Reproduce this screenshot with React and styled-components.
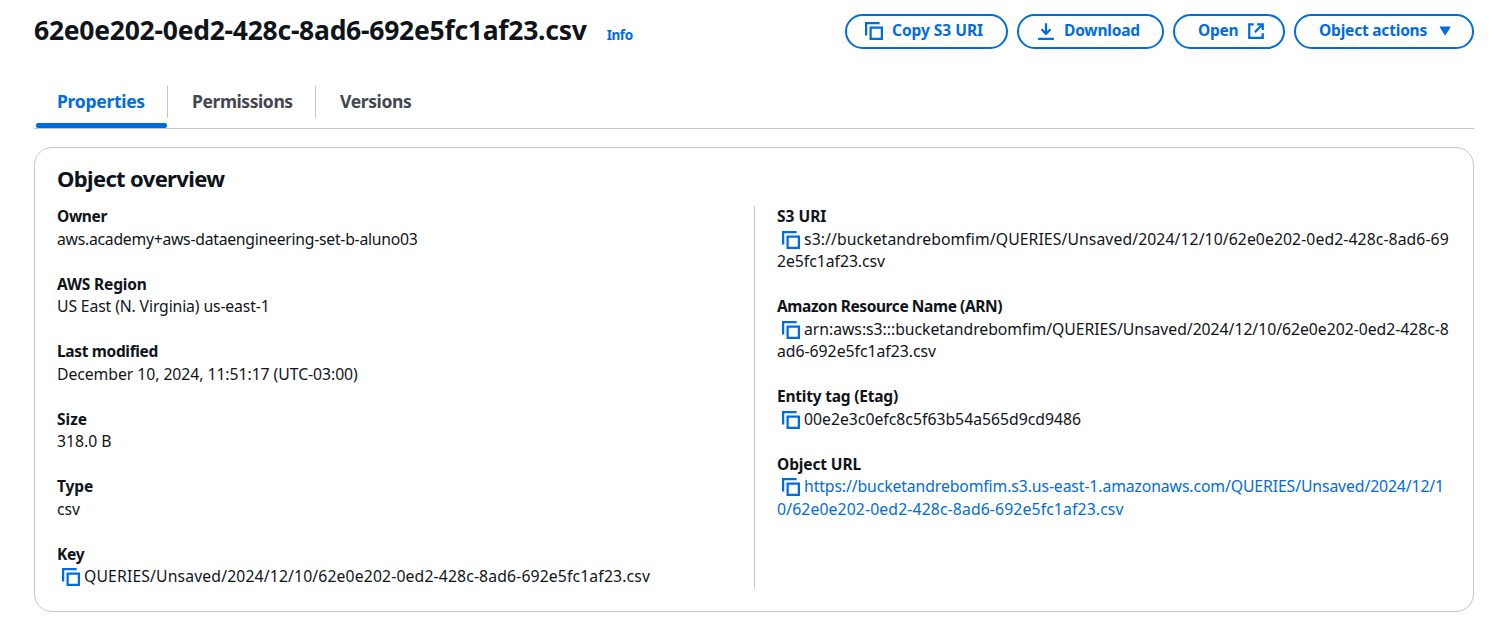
import React from "react";
import styled, { createGlobalStyle } from "styled-components";

const blue = "#006ce0";
const line = "#c6c6cd";

const GlobalStyle = createGlobalStyle`
  *, *::before, *::after { box-sizing: border-box; }
  body {
    margin: 0;
    background: #ffffff;
    color: #0f141a;
    font-family: "Noto Sans", "Open Sans", sans-serif;
    font-size: 15.75px;
    line-height: 22.5px;
  }
`;

const Page = styled.main`
  padding: 14px 26px 11px 34px;
`;

const PageHeader = styled.header`
  display: flex;
  justify-content: space-between;
  align-items: flex-start;
  height: 35px;
`;

const TitleGroup = styled.div`
  display: flex;
  align-items: baseline;
  gap: 20px;
`;

const Title = styled.h1`
  margin: 0;
  font-size: 26.5px;
  line-height: 32px;
  font-weight: 700;
  letter-spacing: -0.26px;
  white-space: nowrap;
`;

const InfoLink = styled.a`
  color: ${blue};
  font-size: 13.5px;
  font-weight: 700;
  letter-spacing: -0.4px;
`;

const Actions = styled.div`
  display: flex;
  gap: 9px;
`;

const ActionButton = styled.button`
  display: flex;
  align-items: center;
  gap: 9px;
  width: ${(p) => p.$width}px;
  height: 35px;
  padding: 0 ${(p) => p.$padEnd ?? 18}px 1px ${(p) => (p.$iconEnd ? 23 : 18)}px;
  justify-content: ${(p) => (p.$iconEnd ? "space-between" : "flex-start")};
  border: 2px solid ${blue};
  border-radius: 18px;
  background: #ffffff;
  color: ${blue};
  font: 700 15.5px/22.5px "Noto Sans", sans-serif;
  letter-spacing: ${(p) => p.$track}px;
  white-space: nowrap;
`;

const ButtonText = styled.span`
  padding-bottom: 1px;
`;

const Icon = styled.svg`
  display: block;
  flex: none;
  width: 18px;
  height: 18px;
  fill: none;
  stroke: ${blue};
  stroke-width: 2;
`;

const Tabs = styled.nav`
  display: flex;
  margin-top: 37px;
  height: 43px;
  border-bottom: 1px solid ${line};
`;

const Tab = styled.div`
  width: ${(p) => p.$width}px;
`;

const TabLabel = styled.a`
  display: block;
  height: 32px;
  padding-left: ${(p) => (p.$active ? 23 : 24)}px;
  border-right: ${(p) => (p.$last ? "none" : `1px solid ${line}`)};
  color: ${(p) => (p.$active ? blue : "#424650")};
  font-size: 17.5px;
  font-weight: 700;
  line-height: 30px;
  letter-spacing: ${(p) => p.$track}px;
`;

const TabIndicator = styled.div`
  height: 5px;
  margin: 5px 1px 0 2px;
  border-radius: 2px;
  background: ${blue};
`;

const Card = styled.section`
  margin-top: 18px;
  height: 465px;
  padding: 17px 22px 22px;
  border: 1px solid ${line};
  border-radius: 18px;
`;

const CardTitle = styled.h2`
  margin: 0 0 14px;
  font-size: 22px;
  line-height: 27px;
  font-weight: 700;
  letter-spacing: -0.65px;
`;

const Columns = styled.div`
  display: grid;
  grid-template-columns: 697px 1fr;
  height: 383px;
`;

const Column = styled.dl`
  display: flex;
  flex-direction: column;
  gap: 22.5px;
  margin: 0;
  padding-left: ${(p) => (p.$divided ? 22 : 0)}px;
  border-left: ${(p) => (p.$divided ? `1px solid ${line}` : "none")};
`;

const Field = styled.div``;

const FieldLabel = styled.dt`
  height: 22.5px;
  font-size: 15.5px;
  font-weight: 700;
  line-height: 20.5px;
  letter-spacing: ${(p) => p.$track}px;
`;

const FieldValue = styled.dd`
  margin: 0;
  color: ${(p) => (p.$link ? blue : "inherit")};
`;

const ValueLine = styled.div`
  display: flex;
  height: 22.5px;
  line-height: 20.5px;
  letter-spacing: ${(p) => p.$track}px;
  white-space: nowrap;
`;

const CopyButton = styled.span`
  padding: 2px 4.5px 0;
`;

const CopyIcon = () => (
  <Icon viewBox="0 0 16 16">
    <path d="M13 1H1v11" />
    <path d="M5 5h10v10H5z" />
  </Icon>
);

const DownloadIcon = () => (
  <Icon viewBox="0 0 16 16">
    <path d="M8 1v10M4 6.5l4 4 4-4M1 15h14" />
  </Icon>
);

const ExternalIcon = () => (
  <Icon viewBox="0 0 16 16">
    <path d="M6 2H2v12h12v-4M9 2h5v5M14 2L7 9" />
  </Icon>
);

const CaretIcon = () => (
  <Icon viewBox="0 0 16 16">
    <path d="M3.8 4.4h8.6L8.1 11.3z" fill={blue} strokeWidth="1" strokeLinejoin="round" />
  </Icon>
);

const leftFields = [
  { label: "Owner", track: -0.36, lines: [["aws.academy+aws-dataengineering-set-b-aluno03", -0.26]] },
  { label: "AWS Region", track: -0.15, lines: [["US East (N. Virginia) us-east-1", -0.13]] },
  { label: "Last modified", track: -0.34, lines: [["December 10, 2024, 11:51:17 (UTC-03:00)", -0.05]] },
  { label: "Size", track: 0, lines: [["318.0 B", 0]] },
  { label: "Type", track: -0.1, lines: [["csv", 0]] },
  {
    label: "Key",
    track: -0.2,
    copy: true,
    lines: [["QUERIES/Unsaved/2024/12/10/62e0e202-0ed2-428c-8ad6-692e5fc1af23.csv", 0.135]],
  },
];

const rightFields = [
  {
    label: "S3 URI",
    track: 0,
    copy: true,
    lines: [
      ["s3://bucketandrebomfim/QUERIES/Unsaved/2024/12/10/62e0e202-0ed2-428c-8ad6-69", 0.085],
      ["2e5fc1af23.csv", -0.03],
    ],
  },
  {
    label: "Amazon Resource Name (ARN)",
    track: -0.41,
    copy: true,
    lines: [
      ["arn:aws:s3:::bucketandrebomfim/QUERIES/Unsaved/2024/12/10/62e0e202-0ed2-428c-8", -0.025],
      ["ad6-692e5fc1af23.csv", 0],
    ],
  },
  { label: "Entity tag (Etag)", track: -0.21, copy: true, lines: [["00e2e3c0efc8c5f63b54a565d9cd9486", 0.01]] },
  {
    label: "Object URL",
    track: -0.12,
    copy: true,
    link: true,
    lines: [
      ["https://bucketandrebomfim.s3.us-east-1.amazonaws.com/QUERIES/Unsaved/2024/12/1", -0.1],
      ["0/62e0e202-0ed2-428c-8ad6-692e5fc1af23.csv", 0.13],
    ],
  },
];

const Fields = ({ items, divided }) => (
  <Column $divided={divided}>
    {items.map((f) => (
      <Field key={f.label}>
        <FieldLabel $track={f.track}>{f.label}</FieldLabel>
        <FieldValue $link={f.link}>
          {f.lines.map(([text, track], i) => (
            <ValueLine key={text} $track={track}>
              {f.copy && i === 0 && (
                <CopyButton>
                  <CopyIcon />
                </CopyButton>
              )}
              <span>{text}</span>
            </ValueLine>
          ))}
        </FieldValue>
      </Field>
    ))}
  </Column>
);

export default function App() {
  return (
    <>
      <GlobalStyle />
      <Page>
        <PageHeader>
          <TitleGroup>
            <Title>62e0e202-0ed2-428c-8ad6-692e5fc1af23.csv</Title>
            <InfoLink>Info</InfoLink>
          </TitleGroup>
          <Actions>
            <ActionButton $width={163} $track={-0.03}>
              <CopyIcon />
              <ButtonText>Copy S3 URI</ButtonText>
            </ActionButton>
            <ActionButton $width={147} $track={-0.2}>
              <DownloadIcon />
              <ButtonText>Download</ButtonText>
            </ActionButton>
            <ActionButton $width={112} $track={-0.3} $iconEnd $padEnd={18} >
              <ButtonText>Open</ButtonText>
              <ExternalIcon />
            </ActionButton>
            <ActionButton $width={180} $track={-0.2} $iconEnd>
              <ButtonText>Object actions</ButtonText>
              <CaretIcon />
            </ActionButton>
          </Actions>
        </PageHeader>
        <Tabs>
          <Tab $width={134}>
            <TabLabel $active $track={-0.28}>Properties</TabLabel>
            <TabIndicator />
          </Tab>
          <Tab $width={148}>
            <TabLabel $track={-0.42}>Permissions</TabLabel>
          </Tab>
          <Tab $width={120}>
            <TabLabel $last $track={-0.38}>Versions</TabLabel>
          </Tab>
        </Tabs>
        <Card>
          <CardTitle>Object overview</CardTitle>
          <Columns>
            <Fields items={leftFields} />
            <Fields items={rightFields} divided />
          </Columns>
        </Card>
      </Page>
    </>
  );
}
